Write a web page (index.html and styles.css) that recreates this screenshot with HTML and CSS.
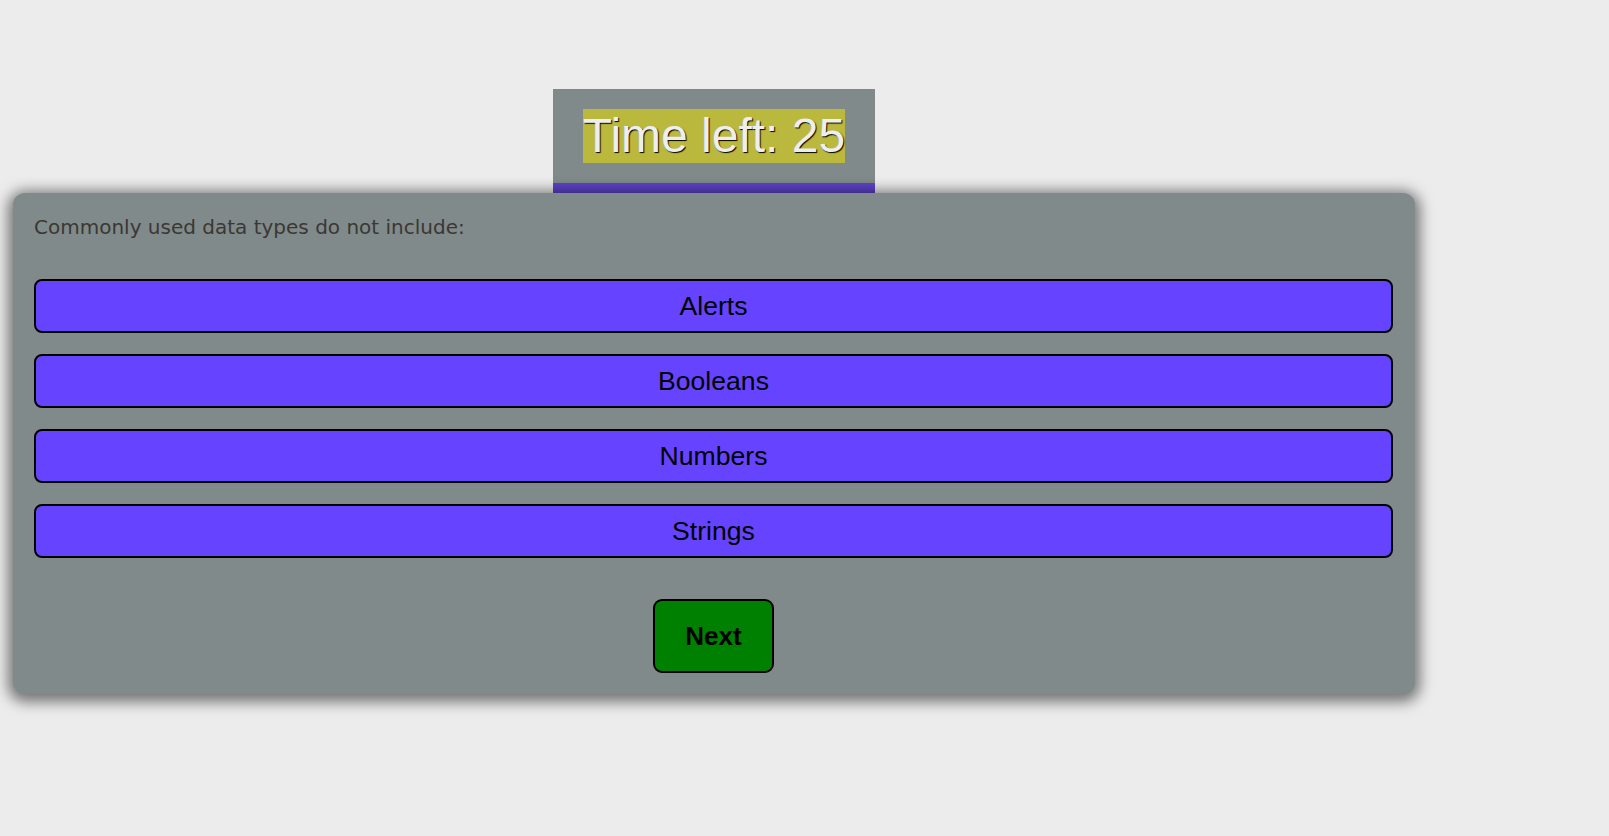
FILE: index.html
```html
<!DOCTYPE html>
<html lang="en">
<head>
<meta charset="utf-8">
<title>Quiz</title>
<link rel="stylesheet" href="styles.css">
</head>
<body>
<div class="page">
  <div class="timer">
    <span class="timer-text">Time left: 25</span>
  </div>
  <div class="card">
    <p class="question">Commonly used data types do not include:</p>
    <div class="answers">
      <button class="answer">Alerts</button>
      <button class="answer">Booleans</button>
      <button class="answer">Numbers</button>
      <button class="answer">Strings</button>
    </div>
    <div class="actions">
      <button class="next">Next</button>
    </div>
  </div>
</div>
</body>
</html>
```

FILE: styles.css
```css
html, body {
  margin: 0;
  padding: 0;
}

html {
  background: #ececec;
}

body {
  min-height: 836px;
  font-family: "Liberation Sans", Arial, sans-serif;
}

.page {
  width: 1402px;
  padding: 89px 0 80px 13px;
  display: flex;
  flex-direction: column;
}

.timer {
  align-self: center;
  background: #818a8a;
  padding: 20px 30px;
  border-bottom: 10px solid #5f43cc;
}

.timer-text {
  display: inline-block;
  vertical-align: top;
  background: #bbb83e;
  color: #eeeeee;
  font-size: 48px;
  line-height: 54px;
  height: 54px;
  text-shadow: 1px 1px 1px #000;
}

.card {
  background: #818a8a;
  border-radius: 12px;
  padding: 22px 22px 21px 21px;
  box-shadow: 0 3px 14px 5px rgba(0, 0, 0, 0.5);
}

.question {
  margin: 0 0 40px;
  font-family: "DejaVu Sans", Verdana, sans-serif;
  font-size: 20px;
  color: #3a3835;
}

.answers {
  display: flex;
  flex-direction: column;
  gap: 21px;
}

.answer {
  display: block;
  width: 100%;
  height: 54px;
  background: #6644ff;
  border: 2px solid #000;
  border-radius: 8px;
  font-family: "Liberation Sans", Arial, sans-serif;
  font-size: 26.6px;
  color: #000;
  padding: 0;
}

.actions {
  display: flex;
  justify-content: center;
  margin-top: 41px;
}

.next {
  background: #008000;
  border: 2px solid #000;
  border-radius: 9px;
  padding: 0 30px;
  height: 74px;
  font-family: "Liberation Sans", Arial, sans-serif;
  font-weight: bold;
  font-size: 26px;
  color: #000;
}
```
